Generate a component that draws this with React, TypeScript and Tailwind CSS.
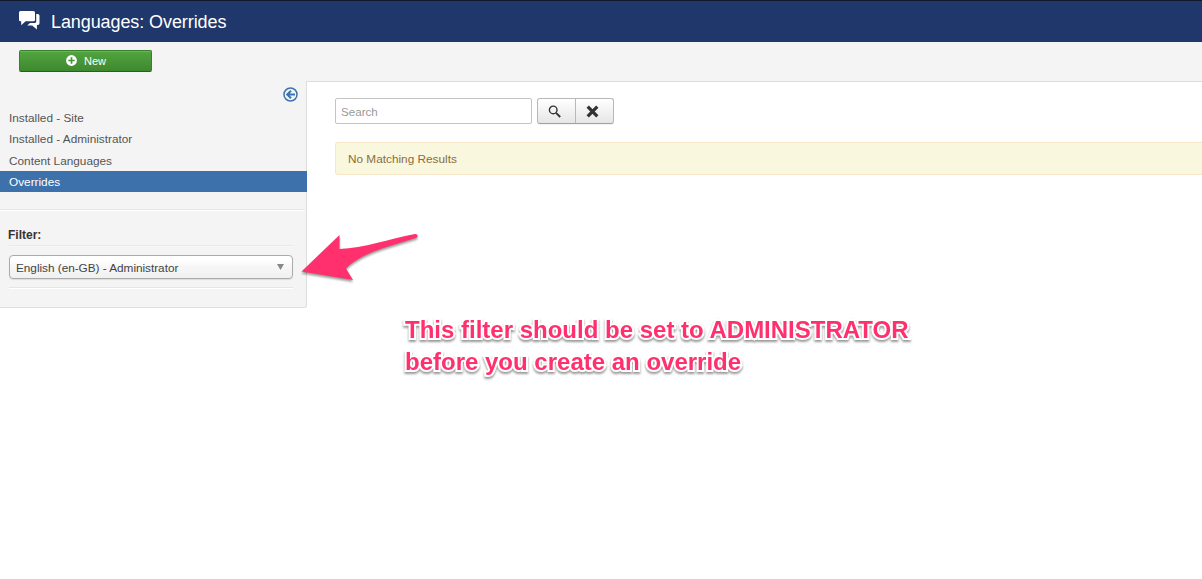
import React from "react";

const links = [
  { label: "Installed - Site", height: "h-[21px]" },
  { label: "Installed - Administrator", height: "h-[22px]" },
  { label: "Content Languages", height: "h-[21px]" },
  { label: "Overrides", height: "h-[21px]", active: true },
];

function CommentsIcon() {
  return (
    <svg width="21" height="19" viewBox="0 0 21 19" fill="#fff">
      <path d="M1.500 0h13A1.500 1.500 0 0 1 16 1.500v7.200a1.500 1.500 0 0 1-1.500 1.500H6.600L2.200 14.200V10.200H1.500A1.500 1.500 0 0 1 0 8.700V1.500A1.500 1.500 0 0 1 1.500 0Z" />
      <path d="M17.200 3h1.600a1.700 1.700 0 0 1 1.700 1.700v7.600a1.700 1.700 0 0 1-1.700 1.700h-.9v4.400L13.200 14.500H8.200L11 12h5.200l1-1V3Z" />
    </svg>
  );
}

function Header() {
  return (
    <header className="flex h-[42px] border-t border-[#10182a] bg-[#1f376a] pl-[19px] text-white">
      <div className="mt-[10px] w-8">
        <CommentsIcon />
      </div>
      <h1 className="mt-[9px] text-[18px] leading-6 tracking-[-0.09px]">Languages: Overrides</h1>
    </header>
  );
}

function Toolbar() {
  return (
    <div className="h-[39px] bg-[#f4f4f4] pt-2 pl-[19px]">
      <button className="flex h-[22px] w-[133px] items-center justify-center gap-[7px] rounded-[2px] border border-[#37802c] border-b-[#285f20] bg-linear-to-b from-[#52a53f] to-[#3e892f] pl-px text-[11px] tracking-normal text-white shadow-[inset_0_1px_0_#6bb35b]">
        <svg className="-mt-px" width="11" height="11" viewBox="0 0 11 11">
          <circle cx="5.500" cy="5.500" r="5.400" fill="#fff" />
          <path d="M5.500 2.300v6.400M2.300 5.500h6.400" stroke="#469637" strokeWidth="1.700" />
        </svg>
        <span>New</span>
      </button>
    </div>
  );
}

function Sidebar() {
  return (
    <aside className="flex h-[227px] w-[307px] shrink-0 flex-col rounded-br-[3px] border-r border-b border-[#dedede] bg-[#f4f4f4]">
      <div className="flex h-[26px] justify-end pt-[6px] pr-[8px]">
        <svg width="15" height="15" viewBox="0 0 15 15" fill="none" stroke="#3b74b0">
          <circle cx="7.500" cy="7.500" r="6.500" strokeWidth="1.500" />
          <path d="M12 7.500H4.500M8 3.700 4.200 7.500 8 11.300" strokeWidth="2" />
        </svg>
      </div>
      <nav className="-mr-px">
        {links.map((link) => (
          <div
            key={link.label}
            className={`flex items-center pl-[9px] ${link.height} ${link.active ? "bg-[#3c71ac] text-white" : "text-[#555]"}`}
          >
            {link.label}
          </div>
        ))}
      </nav>
      <div className="mt-[17px] mr-px h-[2px] border-t border-[#e6e6e6] bg-white" />
      <div className="mr-[13px] ml-[9px] flex flex-col">
        <div className="mt-[15px] mb-px -ml-px h-[18px] text-[12px] leading-[18px] font-bold text-[#333]">Filter:</div>
        <div className="h-[2px] border-t border-[#eaeaea] bg-[#f7f7f7]" />
        <div className="mt-2 flex h-6 items-center justify-between rounded-[4px] border border-[#aaa] bg-linear-to-b from-white from-20% via-[#f6f6f6] via-50% to-[#f1f1f1] pr-2 pl-[7px] text-[#444] shadow-[0_1px_1px_rgba(0,0,0,0.1)]">
          <span className="-ml-px pt-px tracking-[-0.03px]">English (en-GB) - Administrator</span>
          <svg width="7" height="6" viewBox="0 0 7 6" fill="#888">
            <path d="M0 0h7L3.500 6Z" />
          </svg>
        </div>
        <div className="mt-[8px] h-[2px] border-t border-[#e6e6e6] bg-white" />
      </div>
    </aside>
  );
}

function Results() {
  return (
    <main className="min-w-0 flex-1 border-t border-[#dedede] bg-white pt-4 pl-7">
      <div className="flex h-[26px] gap-[5px]">
        <input
          placeholder="Search"
          className="w-[197px] rounded-[2px] border border-[#c4c4c4] px-[5px] pt-px text-[11.600px] placeholder:text-[#999] placeholder:opacity-100"
        />
        <div className="flex w-[77px] rounded-[3px] border border-[#b8b8b8] border-b-[#a0a0a0] bg-linear-to-b from-white to-[#e6e6e6] shadow-[0_1px_1px_rgba(0,0,0,0.05)]">
          <button className="flex w-[38px] items-center border-r border-[#b8b8b8] pl-[10px]">
            <svg width="13" height="13" viewBox="0 0 13 13" fill="none" stroke="#333">
              <circle cx="5.200" cy="4.900" r="3.800" strokeWidth="1.400" />
              <path d="m8 7.800 4.200 4.200" strokeWidth="1.900" />
            </svg>
          </button>
          <button className="flex flex-1 items-center pl-[10px]">
            <svg width="13" height="13" viewBox="0 0 13 13" stroke="#333" strokeWidth="3.300">
              <path d="m1.700 1.700 9.600 9.600M11.300 1.700l-9.600 9.600" />
            </svg>
          </button>
        </div>
      </div>
      <div className="mt-[18px] flex h-[33px] items-center rounded-l-[3px] border border-r-0 border-[#f6e8c7] bg-[#faf7df] pl-[12px] text-[#8a6d3b]">
        No Matching Results
      </div>
    </main>
  );
}

function Annotation() {
  return (
    <>
      <svg className="absolute top-[225px] left-[290px] drop-shadow-[0_2px_1px_rgba(0,0,0,0.4)]" width="140" height="65" viewBox="0 0 140 65" fill="#ff306d">
        <path d="M11.500 46.500 49.500 10v14C74 23 99 14 125 9c2.500-.3 3.500 2.400 1.500 3.800C108 19 71 27 56 43.500L63 55Z" />
      </svg>
      <p className="absolute top-[314px] left-[405px] text-[24px] leading-8 font-bold tracking-normal whitespace-nowrap text-[#ff306d] [paint-order:stroke_fill] [-webkit-text-stroke:4px_white] drop-shadow-[0_2px_1px_rgba(0,0,0,0.4)]">
        <span>This filter should be set to ADMINISTRATOR</span>
        <br />
        <span>before you create an override</span>
      </p>
    </>
  );
}

export default function App() {
  return (
    <div className="relative h-[579px] w-full overflow-hidden bg-white font-['Liberation_Sans',Arial,sans-serif] text-[11.800px] leading-4">
      <Header />
      <Toolbar />
      <div className="flex">
        <Sidebar />
        <Results />
      </div>
      <Annotation />
    </div>
  );
}
